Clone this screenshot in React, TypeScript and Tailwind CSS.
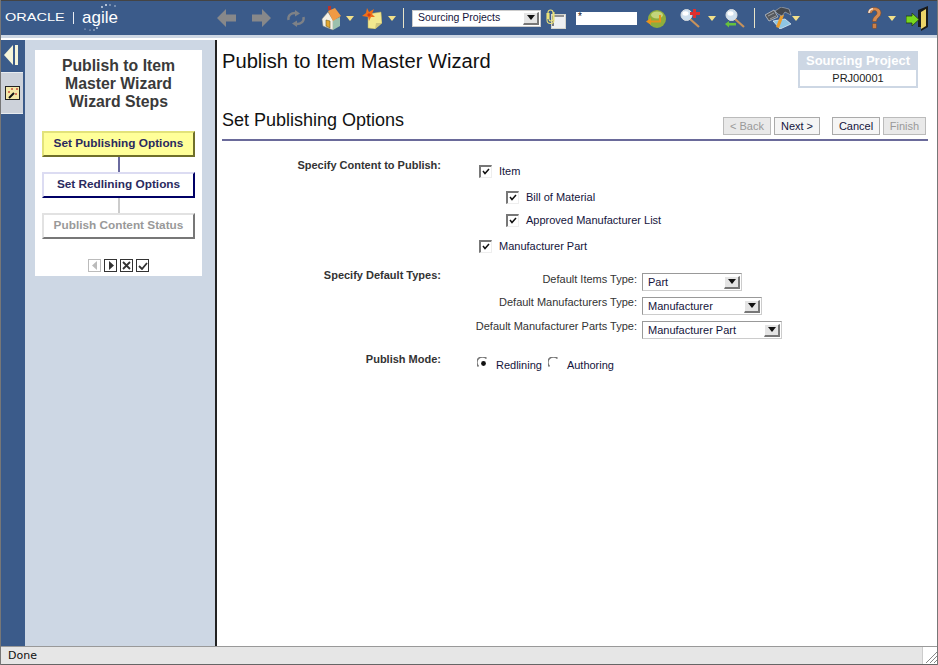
import React from "react";

const Tri = ({ className = "" }: { className?: string }) => (
  <svg width="8" height="5" viewBox="0 0 8 5" className={className}>
    <path d="M0 0H8L4 5Z" fill="#f2e08a" />
  </svg>
);

const Logo = () => (
  <div className="relative flex items-center w-[121px] h-full ml-[4px] text-white">
    <span className="w-[68px] text-[10px] leading-none [transform:scaleX(1.45)] origin-left">ORACLE</span>
    <span className="w-px h-[12px] bg-[#e8ecf2]" />
    <span className="ml-[8px] text-[17px] leading-none -mt-[2px]">agile</span>
    <svg className="absolute left-[77px] top-[2px]" width="40" height="30" viewBox="0 0 40 30">
      <g fill="#dfe6f0">
        <circle cx="20" cy="4" r=".9" /><circle cx="24" cy="2" r="1" /><circle cx="28" cy="2" r=".7" /><circle cx="33" cy="3" r=".7" />
        <circle cx="3" cy="26" r=".6" /><circle cx="8" cy="27" r=".6" /><circle cx="12" cy="27" r=".7" /><circle cx="15" cy="25" r=".9" />
      </g>
    </svg>
  </div>
);

const Arrow = ({ flip }: { flip?: boolean }) => (
  <svg width="20" height="18" viewBox="0 0 20 18" style={{ transform: flip ? "scaleX(-1)" : undefined }}>
    <path d="M0 9 9 0V5.500H19V12.500H9V18Z" fill="#87888a" />
  </svg>
);

const Refresh = () => (
  <svg width="20" height="17" viewBox="0 0 20 17" fill="none" className="mt-[1px]">
    <path d="M2.500 10C1.500 5.500 5.500 2.500 10 3" stroke="#7d8187" strokeWidth="2.400" />
    <path d="M9 0 14 3.500 9 6.500Z" fill="#7d8187" />
    <path d="M17.500 7C18.500 11.500 14.500 14.500 10 14" stroke="#7d8187" strokeWidth="2.400" />
    <path d="M11 17 6 13.500 11 10.500Z" fill="#7d8187" />
  </svg>
);

const Home = () => (
  <svg width="20" height="25" viewBox="0 0 20 25">
    <path d="M7 0h3v4H7z" fill="#b9342b" />
    <path d="M1 13 7 6 12 14V24L2 20Z" fill="#f4f1e6" stroke="#8a8a78" strokeWidth=".5" />
    <path d="M12 14 19 11V20L12 24Z" fill="#9cc0ad" />
    <path d="M7 5 14 2 20 10 12 15Z" fill="#ef9a45" />
    <path d="M5 14 9 15V22L5 20Z" fill="#e3a72f" stroke="#6d5a20" strokeWidth=".6" />
  </svg>
);

const NewIcon = () => (
  <svg width="20" height="21" viewBox="0 0 20 21">
    <path d="M6 6 19 4 20 15 13 21 6 20Z" fill="#f2e88f" stroke="#b7a95c" strokeWidth=".5" />
    <path d="M13 21 14 15 20 15Z" fill="#cfc57c" />
    <path d="M5 0 7 4 12 1 10 6 13 9 9 9 7 13 6 9 0 8 4 5Z" fill="#ef6f1a" />
    <path d="M7 5 9 7 7 9 5 7Z" fill="#d33d16" />
  </svg>
);

const Clip = () => (
  <svg width="20" height="20" viewBox="0 0 20 20">
    <rect x="5.500" y="5.500" width="14" height="14" fill="#eef0f2" stroke="#d4d4cc" />
    <path d="M7 17V7H18" fill="none" stroke="#333" strokeWidth="1.200" />
    <path d="M2 10V3.500a2.500 2.500 0 0 1 5 0V10a2 2 0 0 1-4 0V4M1 4v7a3.500 3.500 0 0 0 7 0V3" fill="none" stroke="#ebe277" strokeWidth="1.100" />
  </svg>
);

const Go = () => (
  <svg width="20" height="18" viewBox="0 0 20 18">
    <circle cx="11" cy="9" r="9" fill="#8fae3c" />
    <ellipse cx="11" cy="5" rx="6" ry="3.500" fill="#c3d57c" />
    <path d="M14 5V11.500H4" fill="none" stroke="#e8941c" strokeWidth="2" />
    <path d="M5 8 0 11.500 5 15Z" fill="#e8941c" />
  </svg>
);

const Magnifier = ({ plus }: { plus?: boolean }) => (
  <svg width="20" height="19" viewBox="0 0 20 19">
    <path d="M10 10 19 18" stroke="#c7925c" strokeWidth="2.200" />
    <circle cx="6.500" cy="6" r="5.500" fill="#cfe0ee" stroke="#d8dcdf" strokeWidth="1" />
    <ellipse cx="5.500" cy="4.500" rx="3" ry="2.200" fill="#fff" />
    {plus ? (
      <path d="M13 0h3v3h4v3h-4v3h-3V6H10V3h3Z" fill="#df2f2f" />
    ) : (
      <path d="M0 15 4 12V14H11V16.500H4V18.500Z" fill="#66c23c" />
    )}
  </svg>
);

const Tools = () => (
  <svg width="27" height="22" viewBox="0 0 27 22">
    <path d="M8 14 20 12 26 17 15 22Z" fill="#8ec6e4" stroke="#eaf4f9" strokeWidth=".7" />
    <path d="M0 8 9 3 13 10 4 14Z" fill="#55585d" stroke="#cfd2d5" strokeWidth=".7" />
    <path d="M3 9 9 6M5 12 11 9" stroke="#cfd2d5" strokeWidth=".6" />
    <path d="M16 7 19 8 14 21 11 20Z" fill="#ea9d2c" />
    <path d="M10 4 16 0 24 2 26 8 20 5 17 9 13 7Z" fill="#44484e" stroke="#b5b9bf" strokeWidth=".6" />
  </svg>
);

const Help = () => (
  <svg width="15" height="22" viewBox="0 0 15 22">
    <path d="M1 6C1 2.500 4 .5 7.500 .5 11.500 .5 14 3 14 6 14 10 9.500 10.500 9.500 14.500H5.500C5.500 9 10 9 10 6 10 4.500 9 3.500 7.500 3.500 6 3.500 5 4.500 5 6Z" fill="#d58a50" stroke="#7c4a28" strokeWidth=".6" />
    <path d="M2 6C2 3.500 4 2 6 1.800" fill="none" stroke="#f7e6d6" strokeWidth="1.500" />
    <rect x="5.500" y="16.500" width="4" height="5" rx="1" fill="#c9804a" stroke="#7c4a28" strokeWidth=".6" />
  </svg>
);

const Exit = () => (
  <svg width="22" height="25" viewBox="0 0 22 25">
    <path d="M12 4 22 0V21L15 25V21H12Z" fill="#1b1b1b" />
    <path d="M15 6 20 3V20L15 23Z" fill="#ecd468" />
    <path d="M0 10H6V7L13 13.500 6 20V17H0Z" fill="#79d81f" stroke="#1f3b10" strokeWidth=".8" />
  </svg>
);

const SelectArrow = () => (
  <span className="flex items-center justify-center w-[16px] h-[13px] bg-[#e4e4e4] border-r-2 border-b-2 border-[#777] border-t border-l border-t-white border-l-white">
    <svg width="8" height="5" viewBox="0 0 8 5"><path d="M0 0H8L4 5Z" fill="#111" /></svg>
  </span>
);

const Select = ({ value, width }: { value: string; width: string }) => (
  <span className={`flex items-center justify-between h-[18px] bg-white border border-[#999] border-r-[#ccc] border-b-[#ccc] pl-[5px] pr-[1px] text-[11px] text-[#14143c] ${width}`}>
    {value}
    <SelectArrow />
  </span>
);

const Check = () => (
  <span className="flex items-center justify-center w-[13px] h-[13px] bg-white border-t-2 border-l-2 border-[#777] border-r border-b border-r-[#eee] border-b-[#eee]">
    <svg width="8" height="7" viewBox="0 0 8 7"><path d="M1 3 3 5.500 7 1" fill="none" stroke="#111" strokeWidth="1.500" /></svg>
  </span>
);

const CheckRow = ({ label, className = "" }: { label: string; className?: string }) => (
  <div className={`flex items-center text-[11px] text-[#14143c] h-[14px] ${className}`}>
    <Check />
    <span className="ml-[7px]">{label}</span>
  </div>
);

const Radio = ({ on }: { on?: boolean }) => (
  <svg width="13" height="13" viewBox="0 0 13 13">
    <path d="M1.500 9.500A5.500 5.500 0 0 1 9.500 1.500" fill="none" stroke="#777" strokeWidth="1.600" />
    {on && <circle cx="6.500" cy="6.500" r="2.400" fill="#111" />}
  </svg>
);

const Step = ({ label, className }: { label: string; className: string }) => (
  <div className={`flex items-center justify-center w-[153px] h-[26px] border-2 font-bold text-[11.8px] ${className}`}>{label}</div>
);

const NavBtn = ({ children, className = "" }: { children: React.ReactNode; className?: string }) => (
  <span className={`flex items-center justify-center w-[13px] h-[13px] border ${className}`}>{children}</span>
);

const WizBtn = ({ label, disabled, className = "" }: { label: string; disabled?: boolean; className?: string }) => (
  <span className={`flex items-center justify-center h-[18px] border text-[11px] ${disabled ? "bg-[#e9e9e9] border-[#bbb] text-[#999]" : "bg-[#f5f5f5] border-[#aaa] text-[#14143c]"} ${className}`}>{label}</span>
);

const TypeRow = ({ label, value, width, className = "", labelClass = "" }: { label: string; value: string; width: string; className?: string; labelClass?: string }) => (
  <div className={`flex items-start ${className}`}>
    <span className={`w-[420px] text-right pr-[5px] text-[11px] leading-[13px] text-[#333] ${labelClass}`}>{label}</span>
    <Select value={value} width={width} />
  </div>
);

export default function App() {
  return (
    <div className="w-[938px] h-[665px] flex flex-col overflow-hidden bg-white border-l border-r border-[#777] font-['Liberation_Sans',Arial,sans-serif]">
      <header className="shrink-0 h-[35px] bg-[#3b5b8a] border-t border-[#444] flex items-center">
        <Logo />
        <div className="ml-[91px]"><Arrow /></div>
        <div className="ml-[14px]"><Arrow flip /></div>
        <div className="ml-[15px]"><Refresh /></div>
        <div className="ml-[15px]"><Home /></div>
        <Tri className="ml-[5px]" />
        <div className="ml-[8px]"><NewIcon /></div>
        <Tri className="ml-[6px]" />
        <span className="ml-[7px] w-px h-[20px] bg-[#e8e4c8]" />
        <span className="ml-[8px] flex items-center justify-between w-[129px] h-[17px] bg-white border border-[#ccc] pl-[5px] pr-[1px] text-[10.5px] text-[#14143c]">
          Sourcing Projects
          <SelectArrow />
        </span>
        <div className="ml-[5px] mt-[1px]"><Clip /></div>
        <span className="ml-[10px] w-[61px] h-[13px] bg-white text-[10px] leading-[9px] pl-[2px] text-[#111]">*</span>
        <div className="ml-[9px] mt-[2px]"><Go /></div>
        <div className="ml-[14px] mt-[1px]"><Magnifier plus /></div>
        <Tri className="ml-[8px]" />
        <div className="ml-[9px] mt-[1px]"><Magnifier /></div>
        <span className="ml-[9px] w-px h-[20px] bg-[#e8e4c8]" />
        <div className="ml-[10px]"><Tools /></div>
        <Tri />
        <div className="ml-[67px]"><Help /></div>
        <Tri className="ml-[6px]" />
        <div className="ml-[10px]"><Exit /></div>
      </header>
      <div className="shrink-0 h-[3px] bg-[#cdd7e4] border-b-2 border-white box-content" />
      <div className="flex-1 flex min-h-0">
        <aside className="w-[24px] bg-[#3b5b8a] flex flex-col">
          <div className="h-[30px] flex items-center gap-[2px] pl-[3px]">
            <svg width="9" height="20" viewBox="0 0 9 20"><path d="M9 0V20L0 10Z" fill="#f7f5d8" /></svg>
            <span className="w-[3px] h-[20px] bg-[#f7f5d8]" />
          </div>
          <div className="mt-[2px] mr-[2px] h-[42px] bg-[#cdd2da] border-y border-[#e8ecf0] flex items-center justify-center">
            <svg width="15" height="14" viewBox="0 0 15 14">
              <rect x=".5" y=".5" width="14" height="13" fill="#f4e8a8" stroke="#222" />
              <path d="M4 12 9 7" stroke="#111" strokeWidth="2" />
              <path d="M6 3h2M7 2v2M11 3h2M12 2v2M10 8h2M11 7v2M3 6h2M4 5v2" stroke="#c2372d" strokeWidth=".8" />
            </svg>
          </div>
        </aside>
        <nav className="w-[190px] bg-[#cdd7e4] pl-[10px] pt-[10px]">
          <div className="w-[167px] h-[226px] bg-white flex flex-col items-center pt-[7px]">
            <h2 className="w-[140px] text-center font-bold text-[15.8px] leading-[18px] text-[#3a3a3a]">
              Publish to Item Master Wizard Wizard Steps
            </h2>
            <Step label="Set Publishing Options" className="mt-[20px] bg-[#ffff99] text-[#2a2a5e] border-[#e2e27a] border-r-[#6f6f2a] border-b-[#6f6f2a]" />
            <span className="w-[2px] h-[15px] bg-[#6a6a9f]" />
            <Step label="Set Redlining Options" className="bg-white text-[#2a2a5e] border-[#dcdcf2] border-r-[#000066] border-b-[#000066]" />
            <span className="w-[2px] h-[15px] bg-[#ccc]" />
            <Step label="Publish Content Status" className="bg-white text-[#999] border-[#e2e2e2] border-r-[#777] border-b-[#777]" />
            <div className="flex gap-[3px] mt-[20px]">
              <NavBtn className="border-[#bbb]"><svg width="6" height="9" viewBox="0 0 6 9"><path d="M5 0V9L0 4.500Z" fill="#bbb" /></svg></NavBtn>
              <NavBtn className="border-[#333]"><svg width="6" height="9" viewBox="0 0 6 9"><path d="M1 0V9L6 4.500Z" fill="#333" /></svg></NavBtn>
              <NavBtn className="border-[#333]"><svg width="9" height="9" viewBox="0 0 9 9"><path d="M1 1 8 8M8 1 1 8" stroke="#333" strokeWidth="1.800" /></svg></NavBtn>
              <NavBtn className="border-[#333]"><svg width="10" height="8" viewBox="0 0 10 8"><path d="M1 4 4 7 9 1" fill="none" stroke="#333" strokeWidth="1.800" /></svg></NavBtn>
            </div>
          </div>
        </nav>
        <main className="flex-1 border-l-2 border-[#222] pl-[5px] pr-[9px] min-w-0">
          <div className="flex justify-between items-start pt-[10px] h-[61px]">
            <h1 className="text-[20.15px] leading-[23px] text-[#111]">Publish to Item Master Wizard</h1>
            <div className="mt-[1px] w-[120px] h-[37px] bg-[#cdd7e4] border-x-2 border-b-2 border-[#cdd7e4] mr-[10px] flex flex-col items-center">
              <span className="h-[19px] flex items-center text-[13px] font-bold text-white">Sourcing Project</span>
              <span className="w-full h-[16px] bg-white flex items-center justify-center text-[11px] text-[#222]">PRJ00001</span>
            </div>
          </div>
          <div className="flex items-end justify-between h-[40px] pb-[4px] border-b-2 border-[#6a6a9a]">
            <h2 className="text-[18px] leading-[21px] text-[#111] mb-[4px]">Set Publishing Options</h2>
            <div className="flex items-center mr-[2px]">
              <WizBtn label="< Back" disabled className="w-[48px]" />
              <WizBtn label="Next >" className="w-[46px] ml-[3px]" />
              <WizBtn label="Cancel" className="w-[48px] ml-[12px]" />
              <WizBtn label="Finish" disabled className="w-[43px] ml-[3px]" />
            </div>
          </div>
          <section className="flex mt-[17px]">
            <div className="w-[219px] text-right text-[11px] font-bold leading-[13px] text-[#333] mt-[1px]">Specify Content to Publish:</div>
            <div className="ml-[38px] mt-[6px] flex flex-col">
              <CheckRow label="Item" />
              <CheckRow label="Bill of Material" className="ml-[27px] mt-[12px]" />
              <CheckRow label="Approved Manufacturer List" className="ml-[27px] mt-[9px]" />
              <CheckRow label="Manufacturer Part" className="mt-[12px]" />
            </div>
          </section>
          <section className="relative mt-[20px] h-[70px]">
            <div className="absolute left-0 -top-[4px] w-[219px] text-right text-[11px] font-bold leading-[13px] text-[#333]">Specify Default Types:</div>
            <TypeRow label="Default Items Type:" value="Part" width="w-[100px]" />
            <TypeRow label="Default Manufacturers Type:" value="Manufacturer" width="w-[120px]" className="mt-[6px]" labelClass="-mt-px" />
            <TypeRow label="Default Manufacturer Parts Type:" value="Manufacturer Part" width="w-[140px]" className="mt-[6px]" labelClass="-mt-px" />
          </section>
          <section className="flex mt-[10px]">
            <div className="w-[219px] text-right text-[11px] font-bold leading-[13px] text-[#333]">Publish Mode:</div>
            <div className="ml-[36px] mt-[4px] flex items-start text-[11px] text-[#14143c]">
              <Radio on />
              <span className="ml-[6px]">Redlining</span>
              <span className="ml-[6px]"><Radio /></span>
              <span className="ml-[6px]">Authoring</span>
            </div>
          </section>
        </main>
      </div>
      <footer className="shrink-0 h-[19px] bg-[#e6e6e6] border-t border-[#999] border-b border-b-[#666] flex items-center justify-between">
        <span className="ml-[7px] mt-[1px] text-[11px] text-[#111] font-['DejaVu_Sans',sans-serif]">Done</span>
        <span className="w-[15px] h-[17px] bg-white border-l border-[#ccc] overflow-hidden">
          <svg width="15" height="17" viewBox="0 0 15 17"><path d="M3 16 14 5M7 16 14 9M11 16 14 13" stroke="#888" strokeWidth="1" /></svg>
        </span>
      </footer>
    </div>
  );
}
